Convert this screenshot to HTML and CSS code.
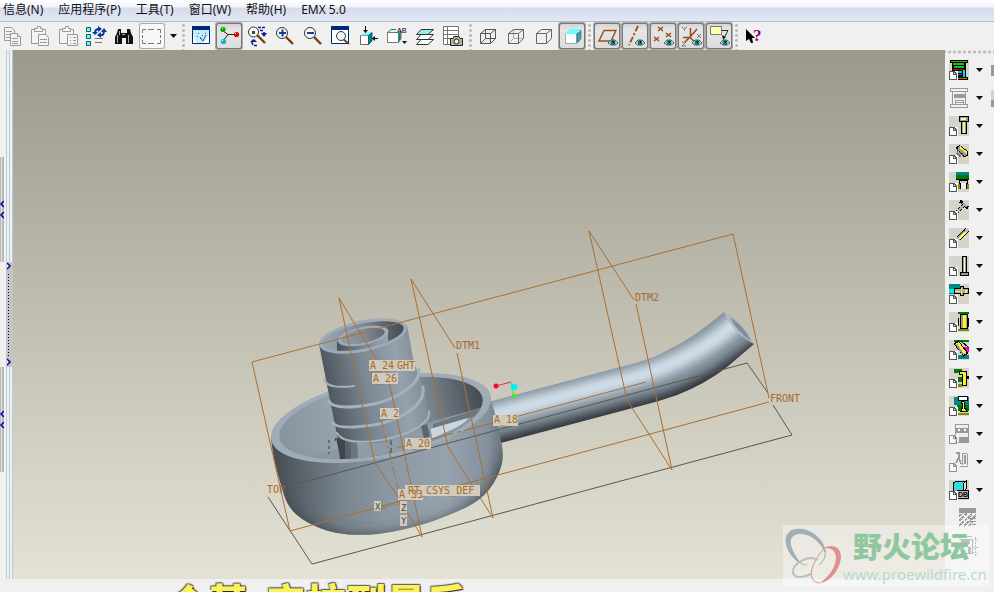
FILE: index.html
```html
<!DOCTYPE html>
<html lang="zh-CN">
<head>
<meta charset="utf-8">
<title>EMX 5.0</title>
<link rel="stylesheet" href="styles.css">
</head>
<body>
<svg class="defs" aria-hidden="true">
  <defs>
    <symbol id="eye" viewBox="0 0 10 7"><path d="M0 4L3 1H7L10 4L7 6H3Z" fill="#e8f4f4" stroke="#555" stroke-width="1"/><circle cx="5" cy="3.500" r="2.500" fill="#007878"/><path d="M5 2h1v2H5z" fill="#012"/></symbol>
    <symbol id="doc" viewBox="0 0 9 9"><path d="M0 0H9V9H0Z" fill="#fff"/><path d="M.5.5H5L7.500 3V8.500H.5Z" fill="#fff" stroke="#555"/><path d="M4.500 .5V3.500H8" fill="none" stroke="#555"/></symbol>
    <symbol id="caret" viewBox="0 0 7 4"><path d="M0 0H7L3.500 4Z" fill="#111"/></symbol>
    <symbol id="lens" viewBox="0 0 20 20"><path d="M11 11L18 18" stroke="#7a3c14" stroke-width="2.400"/><circle cx="7" cy="7" r="5.500" fill="#f8f8f8" stroke="#333"/></symbol>
  </defs>
</svg>
<div class="app">
  <nav class="menu">
    <a href="#">信息(N)</a><a href="#">应用程序(P)</a><a href="#">工具(T)</a><a href="#">窗口(W)</a><a href="#">帮助(H)</a><a href="#">EMX 5.0</a>
  </nav>

  <div class="bar" role="toolbar" aria-label="标准">
    <div class="group first">
      <button class="tool" aria-label="复制"><svg viewBox="-2 22 28 28" fill="#f4f4f4" stroke="#999"><path d="M4.500 27.500H11.500L14.500 30.500V40.500H4.500Z"/><path d="M6 31.500H12M6 34.500H12M6 37.500H10"/><path d="M10.500 33.500H17.500L20.500 36.500V45.500H10.500Z"/><path d="M17.500 33.500V36.500H20.500M12 38.500H18M12 41.500H18M12 43.500H18"/></svg></button>
      <button class="tool" aria-label="粘贴"><svg viewBox="26 22 28 28" fill="#f4f4f4" stroke="#999"><path d="M31.500 29.500H45.500V43.500H31.500Z"/><path d="M34.500 31.500V28.500H37.500V26.500H40.500V28.500H42.500V31.500Z"/><path d="M38.500 34.500H46L48.500 37.500V45.500H38.500Z"/><path d="M40 39.500H47M40 42.500H47"/></svg></button>
      <button class="tool" aria-label="选择性粘贴"><svg viewBox="54 22 28 28" fill="#f4f4f4" stroke="#999"><path d="M59.500 29.500H73.500V43.500H59.500Z"/><path d="M62.500 31.500V28.500H65.500V26.500H68.500V28.500H70.500V31.500Z"/><path d="M67.500 34.500H77.500V45.500H67.500Z"/><path d="M70 37.500H71M70 40.500H71M70 43.500H71M73 37.500H76M73 40.500H76M73 43.500H76"/></svg></button>
      <button class="tool" aria-label="再生"><svg viewBox="82 22 28 28"><path d="M86.500 27.500H90.500V31.500H86.500ZM86.500 34.500H90.500V38.500H86.500ZM86.500 41.500H90.500V45.500H86.500Z" fill="#8ee" stroke="#066"/><path d="M95 38.500H103M95 42.500H102" stroke="#777"/><path d="M95 33C95 30 96 29 99 29M104 30C104 34 103 36 100 35" fill="none" stroke="#003c9c" stroke-width="2"/><path d="M98 26L102 29L98 32ZM101 32L97 35L101 38ZM92 32H98L95 35ZM101 32H107L104 28Z" fill="#003c9c"/></svg></button>
      <button class="tool" aria-label="查找"><svg viewBox="110 22 28 28"><path d="M118 29H121V33H127V29H130L131 33L133 37V44H126V38H122V44H115V37L117 33Z" fill="#111"/><path d="M117.500 35V43M119.500 31V35M128.500 35V43M122 34.500H125" stroke="#aaa"/></svg></button>
      <button class="tool framed" aria-label="选取"><svg viewBox="138 22 28 28"><path d="M142.500 33V29.500H146M148 29.500H154M157 29.500H160.500V33M160.500 35V38M160.500 40V43.500H157M154 43.500H148M146 43.500H142.500V40M142.500 38V35" fill="none" stroke="#777"/></svg></button>
      <button class="drop" aria-label="选取选项"><svg class="caret"><use href="#caret"/></svg></button>
    </div>
    <i class="sep"></i>
    <div class="group">
      <button class="tool" aria-label="重画"><svg viewBox="187 22 28 28"><path d="M192.500 28H209.500V43.500H192.500Z" fill="#c4ecfc" stroke="#002878"/><path d="M192 26H210V30H192Z" fill="#002878"/><path d="M193 43V35L197 43Z" fill="#fff"/><path d="M203 43L209 35V43Z" fill="#fff"/><path d="M198 33h1v1h-1zM202 35h1v1h-1zM205 33h1v1h-1zM200 38h1v1h-1zM197 36h1v1h-1z" fill="#1064c0"/><path d="M200 37L203 41L206 35" fill="none" stroke="#1064c0"/></svg></button>
      <button class="tool pressed" aria-label="旋转中心"><svg viewBox="215 22 28 28"><path d="M223 31L228 34.500L223 41M228 34.500H236" fill="none" stroke="#222"/><circle cx="223" cy="29.500" r="2.600" fill="#0a0"/><circle cx="236.500" cy="34.500" r="2.600" fill="#d00"/><circle cx="223.500" cy="41.500" r="2.600" fill="#0bc"/><path d="M222 28h1v1h-1zM235 33h1v1h-1zM222 40h1v1h-1z" fill="#fff"/></svg></button>
      <button class="tool" aria-label="定向模式"><svg viewBox="243 22 28 28"><path d="M257 35L265 43" stroke="#7a3c14" stroke-width="2.400"/><circle cx="253.500" cy="32" r="5" fill="#f8f8f8" stroke="#333"/><path d="M252 31h3v3h-3z" fill="#444"/><path d="M258 27.500H265M260 30.500H263M264 32V36M257 45.500C252 46 251 42 253 40" fill="none" stroke="#0a1e96" stroke-width="1.600" stroke-dasharray="3 1"/><path d="M250 42L254 39L257 42ZM261 33H267L264 37Z" fill="#0a1e96"/></svg></button>
      <button class="tool" aria-label="放大"><svg viewBox="271 22 28 28"><use href="#lens" x="275" y="26" width="20" height="20"/><path d="M279 33H286M282.500 29.500V36.500" stroke="#123c96" stroke-width="2"/></svg></button>
      <button class="tool" aria-label="缩小"><svg viewBox="299 22 28 28"><use href="#lens" x="303" y="26" width="20" height="20"/><path d="M307 33H314" stroke="#123c96" stroke-width="2"/></svg></button>
      <button class="tool" aria-label="重新调整"><svg viewBox="327 22 28 28"><path d="M331.500 27.500H348.500V43.500H331.500Z" fill="#fff" stroke="#002878"/><path d="M331 26H349V30H331Z" fill="#002878"/><path d="M343 39L349 44" stroke="#7a3c14" stroke-width="2"/><circle cx="341" cy="36" r="4.500" fill="#eef6fc" stroke="#333"/></svg></button>
      <button class="tool" aria-label="重定向"><svg viewBox="355 22 28 28"><path d="M360.500 35.500H368.500V44.500H360.500Z" fill="#fff" stroke="#666"/><path d="M360.500 35.500L364 32.500H372L368.500 35.500Z" fill="#8ee"/><path d="M368.500 35.500L372 32.500V41L368.500 44.500Z" fill="#088" stroke="#066"/><path d="M365.500 26V31M373 38.500H378" stroke="#111"/><path d="M363 30H368L365.500 33ZM375 36V41L372 38.500Z" fill="#111"/></svg></button>
      <button class="tool" aria-label="视图列表"><svg viewBox="383 22 28 28"><path d="M387.500 32.500H398.500V42.500H387.500Z" fill="#fff" stroke="#777"/><path d="M387.500 32.500L391 29.500H396" fill="none" stroke="#088"/><path d="M398.500 33.500L401 31V39L398.500 42.500" fill="#088" stroke="#777"/><path d="M402 41H407L404.500 44Z" fill="#111"/><text class="tiny" x="397" y="33">AB</text></svg></button>
      <button class="tool" aria-label="层"><svg viewBox="411 22 28 28" fill="#fff" stroke="#333"><path d="M416.500 44.500L421 39.500H433.500L428 44.500Z"/><path d="M416.500 39.500L421 34.500H433.500L428 39.500Z"/><path d="M416.500 34.500L421 29.500H433.500L428 34.500Z" fill="#9ee"/></svg></button>
      <button class="tool" aria-label="视图管理器"><svg viewBox="439 22 28 28"><path d="M443.500 26.500H458.500V44.500H443.500Z" fill="#fff" stroke="#777"/><path d="M444 30.500H458M444 34.500H458M444 38.500H458M447.500 27V44" stroke="#777"/><path d="M450.500 38.500H453L454 36.500H459L460 38.500H462.500V45.500H450.500Z" fill="#b8b498" stroke="#222"/><circle cx="456.500" cy="41.500" r="2.500" fill="#eee" stroke="#222"/></svg></button>
    </div>
    <i class="sep"></i>
    <div class="group">
      <button class="tool" aria-label="线框"><svg viewBox="474 22 28 28" fill="none" stroke="#555"><path d="M480.500 33.500H490.500V43.500H480.500ZM485.500 29.500H495.500V38.500H485.500ZM480.500 33.500L485.500 29.500M490.500 33.500L495.500 29.500M480.500 43.500L485.500 38.500M490.500 43.500L495.500 38.500"/></svg></button>
      <button class="tool" aria-label="隐藏线"><svg viewBox="502 22 28 28" fill="none" stroke="#666"><path d="M513.500 30V38.500H523M508.500 43.500L513.500 38.500" stroke="#aaa"/><path d="M508.500 33.500H518.500V43.500H508.500ZM508.500 33.500L513.500 29.500H523.500V38.500L518.500 43.500M518.500 33.500L523.500 29.500"/></svg></button>
      <button class="tool" aria-label="无隐藏线"><svg viewBox="530 22 28 28" fill="none" stroke="#666"><path d="M536.500 33.500H546.500V43.500H536.500ZM536.500 33.500L541.500 29.500H551.500V38.500L546.500 43.500M546.500 33.500L551.500 29.500"/></svg></button>
      <button class="tool pressed" aria-label="着色"><svg viewBox="558 22 28 28"><path d="M565.500 33.500H576.500V43.500H565.500Z" fill="#fff" stroke="#aaa"/><path d="M565 34L570 29H581L576 34Z" fill="#6ff"/><path d="M577 34L581 30V39L577 43Z" fill="#3aa4ae" stroke="#256" stroke-dasharray="1 1"/></svg></button>
    </div>
    <i class="sep"></i>
    <div class="group">
      <button class="tool pressed" aria-label="基准平面"><svg viewBox="593 22 28 28"><path d="M599 41L604 30.500H616L611 41Z" fill="none" stroke="#96501e" stroke-width="1.400"/><use href="#eye" x="608" y="39" width="10" height="7"/></svg></button>
      <button class="tool pressed" aria-label="基准轴"><svg viewBox="621 22 28 28"><path d="M638 26L629 45" fill="none" stroke="#96501e" stroke-width="1.800" stroke-dasharray="6 2 2 2"/><use href="#eye" x="635" y="39" width="10" height="7"/></svg></button>
      <button class="tool pressed" aria-label="基准点"><svg viewBox="649 22 28 28"><path d="M658 27L663 31M663 27L658 31M666 33L671 37M671 33L666 37M654 37L659 41M659 37L654 41" stroke="#96501e" stroke-width="1.600"/><use href="#eye" x="664" y="39" width="10" height="7"/></svg></button>
      <button class="tool pressed" aria-label="坐标系"><svg viewBox="677 22 28 28"><path d="M690.500 28V37M683 37.500H690L697 44M690 37L697 29M690 37L685 42" fill="none" stroke="#96501e" stroke-width="1.600"/><path d="M682 27L684.500 29L687 27M684.500 29V31M697 34L701 38M701 34L697 38M682 42H686L682 46H686" fill="none" stroke="#777"/><use href="#eye" x="692" y="39" width="10" height="7"/></svg></button>
      <button class="tool pressed" aria-label="注释"><svg viewBox="705 22 28 28"><path d="M710.500 26.500H721.500V34.500H710.500Z" fill="#ffa" stroke="#777"/><path d="M722 30.500H728L724 38" fill="none" stroke="#222"/><path d="M722 35L726 37L723 40Z" fill="#222"/><use href="#eye" x="720" y="39" width="10" height="7"/></svg></button>
    </div>
    <i class="sep"></i>
    <div class="group">
      <button class="tool" aria-label="上下文帮助"><svg viewBox="740 22 28 28"><path d="M746 29V41L749 39L751 43H753L752 38H755Z" fill="#000"/><text class="help" x="753" y="41">?</text></svg></button>
    </div>
  </div>

  <main class="work">
    <div class="gutter">
      <div class="grips">
        <button class="grip" aria-label="折叠导航器"><svg viewBox="0 0 4 18"><path d="M4 0L1 3L4 6M4 11L1 14L4 17" fill="none" stroke="#00a" stroke-width="1.500"/></svg></button>
        <button class="grip" aria-label="折叠浏览器"><svg viewBox="0 0 4 18"><path d="M4 0L1 3L4 6M4 11L1 14L4 17" fill="none" stroke="#00a" stroke-width="1.500"/></svg></button>
      </div>
      <div class="rail">
        <button class="tab" aria-label="展开"><svg viewBox="0 0 5 105"><path d="M0 1L3 4L0 7M0 97L3 100L0 103" fill="#fff" stroke="#00a" stroke-width="1.500"/><path d="M1.500 12V94" stroke="#006" stroke-dasharray="1 2"/></svg></button>
      </div>
    </div>

    <div class="canvas">
      <svg viewBox="13 50 932 529" preserveAspectRatio="xMidYMid slice" role="img" aria-label="模型">
        <defs>
          <linearGradient id="bowl" gradientUnits="userSpaceOnUse" x1="272" y1="450" x2="504" y2="450">
            <stop offset="0" stop-color="#454c52"/><stop offset=".1" stop-color="#555e66"/><stop offset=".3" stop-color="#78848e"/><stop offset=".5" stop-color="#8b98a3"/><stop offset=".75" stop-color="#96a3ae"/><stop offset=".93" stop-color="#85919d"/><stop offset="1" stop-color="#66717b"/>
          </linearGradient>
          <linearGradient id="inside" gradientUnits="userSpaceOnUse" x1="279" y1="0" x2="484" y2="0">
            <stop offset="0" stop-color="#87939e"/><stop offset=".25" stop-color="#95a2ad"/><stop offset=".6" stop-color="#8a96a2"/><stop offset=".75" stop-color="#77828c"/><stop offset="1" stop-color="#444b51"/>
          </linearGradient>
          <linearGradient id="tower" gradientUnits="userSpaceOnUse" x1="320" y1="370" x2="422" y2="350">
            <stop offset="0" stop-color="#4b5359"/><stop offset=".12" stop-color="#59626a"/><stop offset=".4" stop-color="#7b8792"/><stop offset=".75" stop-color="#95a2ad"/><stop offset="1" stop-color="#7c8893"/>
          </linearGradient>
          <linearGradient id="bore" gradientUnits="userSpaceOnUse" x1="322" y1="0" x2="405" y2="0">
            <stop offset="0" stop-color="#98a5b0"/><stop offset=".5" stop-color="#818c97"/><stop offset=".85" stop-color="#535b62"/><stop offset="1" stop-color="#454c52"/>
          </linearGradient>
          <linearGradient id="core" gradientUnits="userSpaceOnUse" x1="338" y1="0" x2="388" y2="0">
            <stop offset="0" stop-color="#4a5157"/><stop offset=".5" stop-color="#7b8792"/><stop offset="1" stop-color="#99a6b2"/>
          </linearGradient>
          <filter id="soft" x="-20%" y="-50%" width="140%" height="200%"><feGaussianBlur stdDeviation="5"/></filter>
          <filter id="softer" x="-20%" y="-50%" width="140%" height="200%"><feGaussianBlur stdDeviation="8"/></filter>
          <clipPath id="pipeClip"><path d="M485 403L620 367Q650 360 664 352L683 342Q700 332 724 312Q744 325 754 344L727 367Q705 384 677 395Q660 401 640 406L485 447Z"/></clipPath>
          <clipPath id="bowlClip"><path id="bowlShape" d="M271 438C273 460 280 482 284 495C289 510 298 518 315 526C335 535 355 536 378 534C410 530 440 520 467 507C485 498 497 483 502 463C505 448 499 437 497 420L490 397Z"/></clipPath>
          <clipPath id="insideClip"><ellipse cx="381" cy="418" rx="103.500" ry="36.500" transform="rotate(-11.300 381 418)"/></clipPath>
          <clipPath id="boreClip"><ellipse cx="363" cy="336" rx="41.500" ry="12.500" transform="rotate(-11.700 363 336)"/></clipPath>
        </defs>

        <g clip-path="url(#pipeClip)">
          <path d="M480 300H760V460H480Z" fill="#84919c"/>
          <path d="M470 421L625 380Q665 370 700 349Q720 337 742 318" fill="none" stroke="#d2e0ec" stroke-width="17" filter="url(#soft)"/>
          <path d="M470 454L645 408Q690 397 730 369L765 344" fill="none" stroke="#30363a" stroke-width="19" filter="url(#soft)"/>
        </g>
        <path d="M724 312Q744 322 754 344Q733 333 724 312Z" fill="#aebbc6"/>
        <path d="M730 317Q745 327 751 341Q737 332 730 317Z" fill="#818d98"/>

        <use href="#bowlShape" fill="url(#bowl)"/>
        <g clip-path="url(#bowlClip)"><path d="M270 500C300 548 360 550 405 541C455 530 500 510 512 460" fill="none" stroke="#353b40" stroke-width="17" filter="url(#softer)"/></g>
        <ellipse cx="381" cy="418" rx="112" ry="40" transform="rotate(-11.300 381 418)" fill="#9fabb6"/>
        <ellipse cx="381" cy="418" rx="103.500" ry="36.500" transform="rotate(-11.300 381 418)" fill="url(#inside)"/>
        <g clip-path="url(#insideClip)">
          <path d="M310 457L420 425L480 408V470H310Z" fill="#8b98a3"/>
          <path d="M433 424L483 407V414L433 428Z" fill="#6c7781"/>
          <path d="M430 429L468 418Q466 425 430 439Z" fill="#cad7e2"/>
          <path d="M329 440V454M336 438L335 441" stroke="#333a3f" stroke-dasharray="3 3"/>
          <path d="M334 410L424 390L432 438Q400 458 340 460Z" fill="url(#tower)"/>
          <path d="M336 438L345 441V460H341Z" fill="#3f464b"/>
          <path d="M351 443H357V460H351Z" fill="#6b7680"/>
          <path d="M357 443Q395 443 430 424L432 438Q400 456 358 459Z" fill="#8f9ca7"/>
          <path d="M421 426L427 424L430 436L424 439Z" fill="#5c656d"/>
          <path d="M391 440V456" stroke="#333a3f" stroke-dasharray="5 3"/>
        </g>
        <path d="M319 344L327 385L337 435Q365 450 400 438L428 420L421 380L414 363L407 325Z" fill="url(#tower)"/>
        <ellipse cx="363" cy="336" rx="44.800" ry="15.500" transform="rotate(-11.700 363 336)" fill="#9fabb6"/>
        <ellipse cx="363" cy="336" rx="41.500" ry="12.500" transform="rotate(-11.700 363 336)" fill="url(#bore)"/>
        <g clip-path="url(#boreClip)">
          <path d="M337 341V360H388V332Z" fill="url(#core)"/>
          <ellipse cx="363" cy="336" rx="26" ry="9" transform="rotate(-11.700 363 336)" fill="#9fabb6"/>
          <ellipse cx="363" cy="336" rx="22" ry="7" transform="rotate(-11.700 363 336)" fill="url(#bore)"/>
        </g>
        <g fill="none" stroke="#a5b2bd" stroke-width="3" stroke-linecap="round">
          <path d="M324 379C326 387 338 388 354 386" stroke-width="2"/>
          <path d="M329 401C333 410 358 407 374 404C396 399 421 385 419 369"/>
          <path d="M333 423C338 430 361 427 379 424C404 418 426 404 423 387"/>
          <path d="M337 433C344 446 378 442 394 437C412 432 432 422 429 411" stroke-width="2"/>
        </g>

        <g fill="none" stroke="#595750">
          <path d="M268 497L312 564L792 435L773 405M768 393L747 363L285 487"/>
        </g>
        <g fill="none" stroke="#aa7032">
          <path d="M769 398L733 234L252 362L290 531L769 402"/>
          <path d="M378 362L339 298L375 463L398 497L422 537L386 367"/>
          <path d="M455 348L411 279L448 447L493 518L457 353"/>
          <path d="M634 300L589 231L627 400L672 470L636 304"/>
          <path d="M646 382L500 421"/>
          <path d="M493 423L398 448" stroke-dasharray="30 3 4 3"/>
          <path d="M369 361L375 392M381 420L400 495M378 507L405 500M380 509L406 502M403 500V525" stroke-dasharray="8 3 2 3"/>
        </g>
        <g class="plates">
          <path d="M392 360H415V371H392ZM369 360H396V371H369ZM372 373H398V384H372ZM380 408H399V419H380ZM405 438H431V449H405ZM405 485H480V496H405ZM398 489H423V500H398ZM493 415H518V426H493ZM374 501H381V511H374ZM400 501H407V513H400ZM400 515H407V526H400Z"/>
        </g>
        <g class="labels">
          <text x="370" y="369">A_24</text><text x="397" y="369">GHT</text><text x="373" y="382">A_26</text><text x="381" y="417">A_2</text><text x="406" y="447">A_20</text><text x="408" y="494">RT_CSYS_DEF</text><text x="399" y="498">A_33</text><text x="494" y="423">A_18</text><text x="267" y="493">TOP</text><text x="456" y="349">DTM1</text><text x="635" y="301">DTM2</text><text x="770" y="402">FRONT</text>
          <text class="axis" x="375" y="510">X</text><text class="axis" x="401" y="511">Z</text><text class="axis" x="401" y="524">Y</text>
        </g>
        <path d="M496 386L511 382" stroke="#f02040"/><path d="M511 382L514 396" stroke="#4e2"/>
        <circle cx="496" cy="386" r="2.500" fill="#f00c30"/><circle cx="514" cy="387" r="3.200" fill="#00f0f4"/><circle cx="514" cy="396" r="2.300" fill="#46e62a"/>
      </svg>
    </div>

    <div class="side" role="toolbar" aria-label="EMX">
      <div class="row"><button class="part" aria-label="组件定义"><svg viewBox="0 0 20 20"><path d="M1 0H19V3H17V17H19V20H9V11H3V3H1Z" fill="#000"/><path d="M2 1H18V2H2Z" fill="#880"/><path d="M4 3H15V5H4ZM5 6H15V8H5Z" fill="#0c2"/><path d="M4 9H15V10H4Z" fill="#e00"/><path d="M9 11H13V13H9Z" fill="#0cc"/><path d="M9 14H13V15H9Z" fill="#e0e"/><path d="M14 10H16V17H14Z" fill="#0dd"/><path d="M9 18H18V19H9Z" fill="#880"/><use href="#doc" y="11" width="9" height="9"/></svg></button><button class="more" aria-label="更多"><svg class="caret"><use href="#caret"/></svg></button><button class="sliver" aria-label="下一列"></button></div>
      <div class="row"><button class="part off" aria-label="模架"><svg viewBox="0 0 20 20" fill="none" stroke="#999"><path d="M1.500.5H18.500V3.500H1.500ZM3.500 3.500V16M16.500 3.500V16M1.500 16.500H18.500V19.500H1.500Z"/><path d="M5 6H15V9H5Z" fill="#999"/><path d="M6 12.500H14M6 14.500H14M6 12V16M14 12V16"/></svg></button><button class="more" aria-label="更多"><svg class="caret"><use href="#caret"/></svg></button><button class="sliver low" aria-label="下一列"></button></div>
      <div class="row"><button class="part" aria-label="螺钉"><svg viewBox="0 0 20 20"><path d="M10.500.5H19.500V5.500H17.500V17.500H12.500V5.500H10.500Z" fill="#999" stroke="#000"/><path d="M14 6H15V17H14ZM12 2H17V4H12Z" fill="#ffffb0"/><path d="M15 6H16V17H15Z" fill="#fe3"/><path d="M11 5.500H19" stroke="#000"/><use href="#doc" y="11" width="9" height="9"/></svg></button><button class="more" aria-label="更多"><svg class="caret"><use href="#caret"/></svg></button></div>
      <div class="row"><button class="part" aria-label="定位销"><svg viewBox="0 0 20 20"><path d="M7.500 4L10.500 1.500L18.500 7.500V11.500L15 12.500Z" fill="#999" stroke="#000"/><path d="M11 3L18 9" stroke="#fe3" stroke-width="2"/><path d="M8 6L14 11" stroke="#555" stroke-width="2" stroke-dasharray="2 1"/><path d="M8 9L12 13" stroke="#777" stroke-width="2"/><use href="#doc" y="11" width="9" height="9"/></svg></button><button class="more" aria-label="更多"><svg class="caret"><use href="#caret"/></svg></button></div>
      <div class="row"><button class="part" aria-label="导向件"><svg viewBox="0 0 20 20"><path d="M7 0H20V3H7Z" fill="#088"/><path d="M7 3H20V7H7Z" fill="#070"/><path d="M7 7H20V8H7Z" fill="#000"/><path d="M10.500 8H18.500V11.500H10.500Z" fill="#ccc" stroke="#000"/><path d="M9 12H20V17H9Z" fill="#880"/><path d="M12 11H17V17H12Z" fill="#eee"/><path d="M11.500 12V17M17.500 12V17" stroke="#000"/><use href="#doc" y="11" width="9" height="9"/></svg></button><button class="more" aria-label="更多"><svg class="caret"><use href="#caret"/></svg></button></div>
      <div class="row"><button class="part" aria-label="冷却"><svg viewBox="0 0 20 20"><path d="M7 13L16 4" stroke="#000" stroke-width="4" stroke-dasharray="3 1"/><path d="M11 1L19 8" stroke="#000" stroke-width="3"/><path d="M8 12L16 4M14 3L18 7" stroke="#aaa" stroke-width="1.500"/><use href="#doc" y="11" width="9" height="9"/></svg></button><button class="more" aria-label="更多"><svg class="caret"><use href="#caret"/></svg></button></div>
      <div class="row"><button class="part" aria-label="顶杆"><svg viewBox="0 0 20 20"><path d="M9 11L18 2" stroke="#000" stroke-width="5"/><path d="M9 11L16 4" stroke="#999" stroke-width="3"/><path d="M10 11L17 4" stroke="#ff6" stroke-width="1.500"/><circle cx="17.500" cy="2.500" r="1.500" fill="#bbb"/><use href="#doc" y="11" width="9" height="9"/></svg></button><button class="more" aria-label="更多"><svg class="caret"><use href="#caret"/></svg></button></div>
      <div class="row"><button class="part" aria-label="支撑柱"><svg viewBox="0 0 20 20"><path d="M13.500.5H17.500V16.500H19.500V19.500H11.500V16.500H13.500Z" fill="#999" stroke="#000"/><path d="M15 1H16V16H15Z" fill="#ffb"/><path d="M11 16.500H19" stroke="#000"/><use href="#doc" y="11" width="9" height="9"/></svg></button><button class="more" aria-label="更多"><svg class="caret"><use href="#caret"/></svg></button></div>
      <div class="row"><button class="part" aria-label="喷嘴"><svg viewBox="0 0 20 20"><path d="M0 0H11V10H0Z" fill="#088"/><path d="M0 5H5V9H0Z" fill="#0ee"/><path d="M5.500 4.500H11.500V2.500H14.500V4.500H19.500V9.500H14.500V11.500H11.500V9.500H5.500Z" fill="#aaa" stroke="#000"/><path d="M6 7H11V8H6ZM12 4H13V10H12ZM16 6H18V9H16Z" fill="#fe3"/><use href="#doc" y="11" width="9" height="9"/></svg></button><button class="more" aria-label="更多"><svg class="caret"><use href="#caret"/></svg></button></div>
      <div class="row"><button class="part" aria-label="弹簧"><svg viewBox="0 0 20 20"><path d="M9 0H20V2H9Z" fill="#070"/><path d="M9 17H20V19H9Z" fill="#880"/><path d="M11.500 2.500H18.500V16.500H11.500Z" fill="#999" stroke="#000"/><path d="M14 3H17V16H14Z" fill="#fe3"/><path d="M9.500 6V14M19.500 6V15" stroke="#000"/><use href="#doc" y="11" width="9" height="9"/></svg></button><button class="more" aria-label="更多"><svg class="caret"><use href="#caret"/></svg></button></div>
      <div class="row"><button class="part" aria-label="斜导柱"><svg viewBox="0 0 20 20"><path d="M5 0H20V2H5Z" fill="#070"/><path d="M14 7H20V12H14Z" fill="#e0d"/><path d="M9 15H20V19H9Z" fill="#088"/><path d="M7 2L17 15" stroke="#000" stroke-width="6"/><path d="M8 3L16 14" stroke="#fe3" stroke-width="4"/><path d="M7 4L14 14" stroke="#999" stroke-width="2"/><path d="M12 1L20 8" stroke="#000"/><use href="#doc" y="11" width="9" height="9"/></svg></button><button class="more" aria-label="更多"><svg class="caret"><use href="#caret"/></svg></button></div>
      <div class="row"><button class="part" aria-label="滑块"><svg viewBox="0 0 20 20"><path d="M5 1H13V5H5ZM9 9H13V14H9Z" fill="#070"/><path d="M9 16H13V19H9Z" fill="#880"/><path d="M10.500 3.500H17.500V17.500H13.500V6.500H10.500Z" fill="#fe3" stroke="#000"/><path d="M18 8H20V11H18Z" fill="#000"/><use href="#doc" y="11" width="9" height="9"/></svg></button><button class="more" aria-label="更多"><svg class="caret"><use href="#caret"/></svg></button></div>
      <div class="row"><button class="part" aria-label="斜顶"><svg viewBox="0 0 20 20"><path d="M5 1H20V9H5Z" fill="#088"/><path d="M8 9H20V15H8Z" fill="#070"/><path d="M8 17H20V19H8Z" fill="#880"/><path d="M9.500 4.500V.5H18.500V4.500Z" fill="#fff" stroke="#000"/><path d="M12 5L15 6L15 11L18 15H12L14 10Z" fill="#fe3" stroke="#000"/><use href="#doc" y="11" width="9" height="9"/></svg></button><button class="more" aria-label="更多"><svg class="caret"><use href="#caret"/></svg></button></div>
      <div class="row"><button class="part off" aria-label="锁模块"><svg viewBox="0 0 20 20"><path d="M6.500.5H19.500V18.500H6.500Z" fill="#eee" stroke="#999"/><path d="M7 4H19V9H7ZM10 13H19V18H10Z" fill="#999"/><path d="M9 5H11V7H9ZM15 5H17V7H15Z" fill="#fff"/><use href="#doc" y="11" width="9" height="9" opacity=".6"/></svg></button><button class="more" aria-label="更多"><svg class="caret"><use href="#caret"/></svg></button></div>
      <div class="row"><button class="part off" aria-label="热流道"><svg viewBox="0 0 20 20"><path d="M7 1H10V5L7 11M10 5L12 12M13.500 2V13M18.500 2V13M13 1.500H18M11 14.500H19M16 3V12" fill="none" stroke="#999" stroke-width="1.500"/><use href="#doc" y="11" width="9" height="9" opacity=".6"/></svg></button><button class="more" aria-label="更多"><svg class="caret"><use href="#caret"/></svg></button></div>
      <div class="row"><button class="part" aria-label="元件库"><svg viewBox="0 0 20 20"><path d="M4.500 3L7 1H17V9L14 12H4.500Z" fill="#3dd" stroke="#000"/><path d="M14 4L17 1V9L14 12Z" fill="#ddd" stroke="#000"/><path d="M8.500 10.500H19.500V18.500H8.500Z" fill="#bbb" stroke="#000"/><text class="db" x="9" y="17">DB</text><use href="#doc" y="11" width="9" height="9"/></svg></button><button class="more" aria-label="更多"><svg class="caret"><use href="#caret"/></svg></button></div>
      <div class="row wide"><button class="part off" aria-label="材料清单"><svg viewBox="0 0 20 20"><path d="M1 0H18V5H1Z" fill="#999"/><path d="M1 8L5 5M1 13L9 5M1 18L14 6M6 18L18 7M11 18L14 14" stroke="#999" stroke-width="2" stroke-dasharray="3 1"/><path d="M11 10.500H18M11 13.500H18M14 16.500H18" stroke="#999"/></svg></button></div>
      <div class="row wide"><button class="part off" aria-label="开模模拟"><svg viewBox="0 0 20 20"><path d="M0 .5H14M1 3.500H14V17M2 17.500H15M3 8V17" stroke="#999" fill="none"/><path d="M3 4H12V8H3ZM2 9H6V15H2ZM10 11H13V17H10Z" fill="#999"/><path d="M17.500 3V18M15 5L17.500 2L20 5M15 16L17.500 19L20 16M15 11H20" stroke="#999" fill="none" stroke-dasharray="2 1"/></svg></button></div>
    </div>
  </main>

  <footer class="caption"><span>个基</span><span>它拉到最后</span></footer>

  <div class="mark">
    <svg viewBox="783 525 60 61" aria-hidden="true" fill="none">
      <path d="M825 552C824 537 806 526 793 530C780 535 787 555 800 563C792 552 786 540 794 535C804 530 819 538 825 552Z" fill="#a0aeb6" stroke="#a0aeb6"/>
      <path d="M797 560C801 564 804 565 807 565M825 550C826 556 824 561 819 565" stroke="#a0aeb6"/>
      <path d="M822 549C831 543 841 546 841 557C840 570 830 582 820 583C828 577 836 568 836 557C835 549 829 547 822 549Z" fill="#dd918e"/>
      <path d="M820 583C812 583 809 575 813 566C815 560 819 554 824 549" stroke="#dd918e"/>
      <path d="M818 560C808 554 792 564 793 573C795 580 807 576 811 574" stroke="#b9c0c0" stroke-width="2"/>
    </svg>
    <div class="words"><strong>野火论坛</strong><a href="#">www.proewildfire.cn</a></div>
  </div>
</div>
</body>
</html>
```

FILE: styles.css
```css
* { box-sizing: border-box; }
body {
  margin: 0;
  overflow: hidden;
  background: #f0f0f0;
  font: 12px/20px "Noto Sans", "Noto Sans CJK SC", sans-serif;
  color: #111;
}
button {
  display: block;
  flex: none;
  margin: 0;
  padding: 0;
  border: 0;
  background: none;
}
a { color: inherit; text-decoration: none; }
svg { display: block; }
.defs { position: absolute; width: 0; height: 0; }

.app {
  position: relative;
  display: grid;
  grid-template-rows: 22px 28px minmax(0, 1fr) 13px;
  height: 100vh;
}

.menu {
  display: flex;
  gap: 15px;
  padding-left: 3px;
  white-space: nowrap;
  background: linear-gradient(#fff 0, #f2f5fb 7px, #d6dcee 8px, #e2e7f5 21px);
  border-bottom: 1px solid #b4bacb;
}

.bar { display: flex; overflow: hidden; background: #f0f0f0; }
.group { display: flex; flex: none; }
.first { margin-left: -2px; }
.tool { width: 28px; height: 28px; border-radius: 4px; }
.tool svg { width: 28px; height: 28px; }
.pressed {
  background: linear-gradient(#cfcfcf, #e6e6e6 8px, #dcdcdc);
  box-shadow: inset 0 0 0 1px #aaa, inset 0 0 0 2px #777;
}
.framed { background: #f8f8f8; box-shadow: inset 0 0 0 1px #f0f0f0, inset 0 0 0 2px #aaa; }
.drop { display: grid; width: 14px; place-items: center; }
.caret { width: 7px; height: 4px; }
.sep {
  flex: none;
  width: 7px;
  background: radial-gradient(circle, #bbb 1px, transparent 2px) 2px 1px / 3px 5px repeat-y;
}
.tiny { font: 8px "Liberation Mono", monospace; fill: #111; }
.help { font: bold 17px "Liberation Serif", serif; fill: #800080; }

.work { display: flex; min-height: 0; }
.gutter { display: flex; flex: none; gap: 2px; width: 13px; }
.grips {
  display: flex;
  flex-direction: column;
  justify-content: center;
  gap: 105px;
  width: 4px;
}
.grip {
  display: grid;
  place-items: center;
  width: 4px;
  height: 105px;
  background: linear-gradient(90deg, transparent 1px, #e4e4e4 1px 2px, transparent 2px) 0 0 / 4px 2px, #b8b8b8;
}
.grip svg { width: 4px; height: 18px; }
.rail {
  display: flex;
  align-items: center;
  width: 7px;
  background: linear-gradient(90deg, #b8cadc 1px, #f0f0f0 1px 3px, #b8cadc 3px 4px, #f0f0f0 4px 6px, #b8cadc 6px);
}
.tab { width: 7px; height: 105px; padding-left: 1px; background: #c4c4c4; }
.tab svg { width: 5px; height: 105px; }

.canvas {
  flex: 1;
  min-width: 0;
  background: linear-gradient(#9b988c, #bfbcb0 48%, #e4e1d5);
}
.canvas svg { width: 100%; height: 100%; }
.plates { fill: #d0cbbb; }
.labels { font: 10px "DejaVu Sans Mono", monospace; fill: #a8692a; }
.axis { fill: #444; font-size: 9px; }

.side {
  flex: none;
  width: 49px;
  padding-top: 6px;
  overflow: hidden;
  background: radial-gradient(circle, #bbb 1px, transparent 2px) 2px 0 / 5px 4px repeat-x, #f0f0f0;
}
.row { display: flex; align-items: center; gap: 7px; height: 28px; padding-left: 4px; }
.wide { padding-left: 13px; }
.part { width: 20px; height: 20px; background: #d6d4ca; }
.off { background: none; }
.part svg { width: 20px; height: 20px; shape-rendering: crispEdges; }
.more { width: 8px; }
.sliver { width: 3px; height: 11px; background: #999; }
.low { height: 17px; background: #d6d4ca; border-bottom: 7px solid #999; }
.db { font: bold 7px "Liberation Sans", sans-serif; fill: #000; }

.caption {
  display: flex;
  gap: 18px;
  padding-left: 168px;
  overflow: hidden;
  font: 900 40px/44px "Noto Sans CJK SC", sans-serif;
  color: #fbf25a;
  white-space: nowrap;
  text-shadow: 1px 1px 1px #222, -1px -1px 1px #666, 1px -1px 1px #666;
}

.mark {
  position: absolute;
  right: 5px;
  bottom: 6px;
  display: flex;
  width: 206px;
  height: 61px;
  background: rgba(255, 255, 255, .38);
}
.mark svg { flex: none; width: 60px; height: 61px; }
.words { display: flex; flex-direction: column; white-space: nowrap; color: #b9dace; }
.words strong {
  padding-left: 10px;
  font: 900 29px/40px "Noto Sans CJK SC", sans-serif;
  color: #8fc89f;
}
.words a { font: 15px/18px "Noto Sans", sans-serif; }
```
